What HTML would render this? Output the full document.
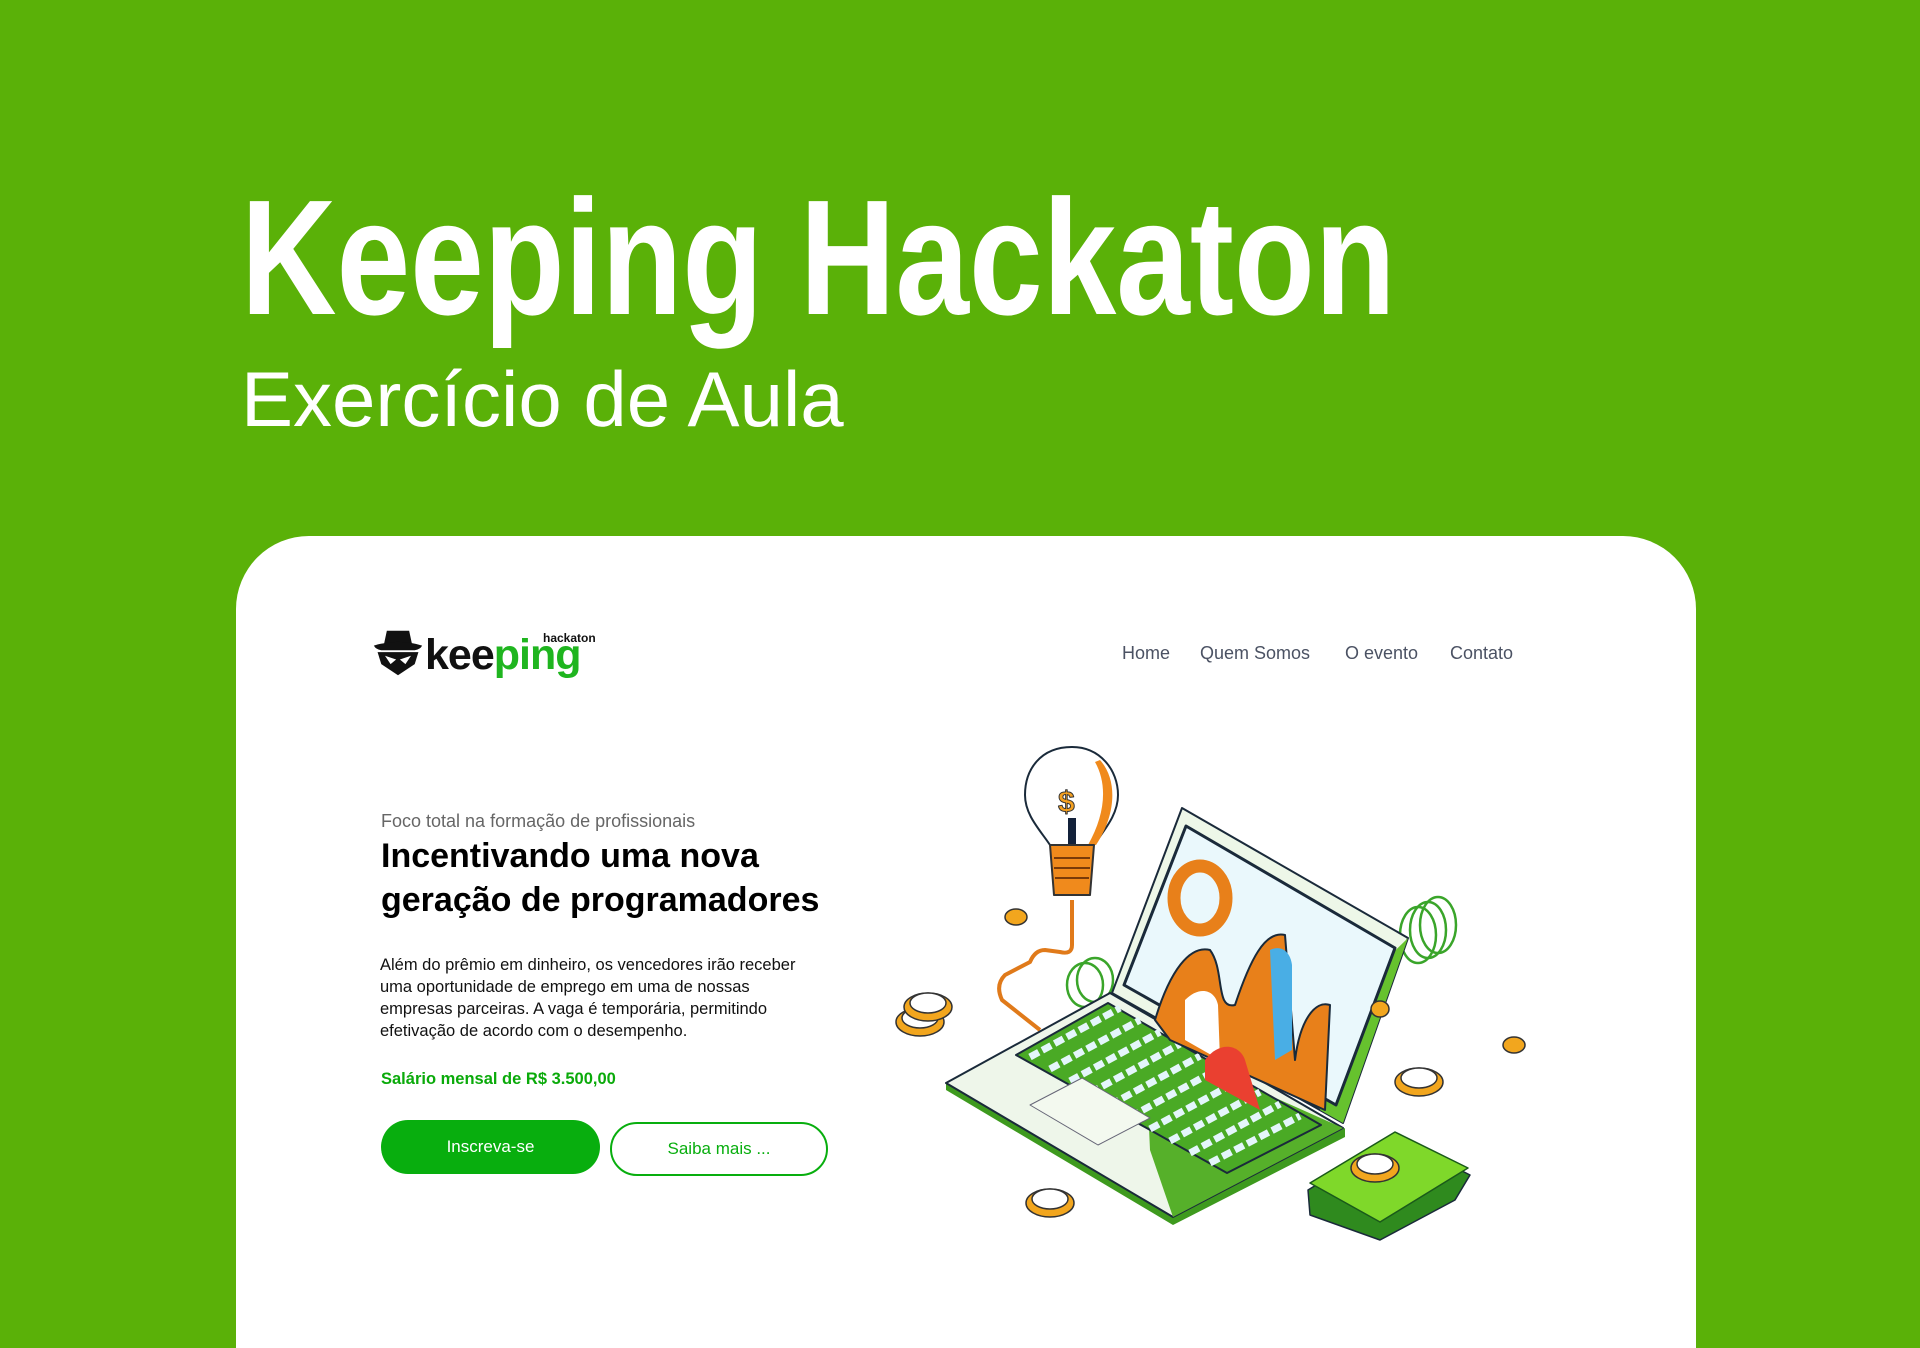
<!DOCTYPE html>
<html><head><meta charset="utf-8"><style>
*{margin:0;padding:0;box-sizing:border-box}
html{width:1920px;height:1348px;overflow:hidden}
body{width:1920px;height:1348px;background:#5ab108;position:relative;overflow:hidden;font-family:"Liberation Sans",sans-serif}
.t1{position:absolute;left:241px;top:176px;font-size:164px;font-weight:700;color:#fff;transform:scaleX(0.807);transform-origin:left top;white-space:nowrap;line-height:1}
.t2{position:absolute;left:241px;top:360px;font-size:78px;color:#fff;line-height:1;white-space:nowrap;font-weight:300}
.card{position:absolute;left:236px;top:536px;width:1460px;height:812px;background:#fff;border-radius:73px 73px 0 0}
.nav{position:absolute;top:643px;font-size:18px;color:#4b5263;white-space:nowrap}
.foco{position:absolute;left:381px;top:811px;font-size:18px;color:#666}
.h{position:absolute;left:381px;top:834px;font-size:34px;font-weight:700;color:#000;line-height:44px;white-space:nowrap}
.p{position:absolute;left:380px;top:954px;font-size:16.5px;color:#111;line-height:22px;white-space:nowrap}
.sal{position:absolute;left:381px;top:1070px;font-size:16.5px;color:#0aaa0a;font-weight:700}
.b1{position:absolute;left:381px;top:1120px;width:219px;height:54px;border-radius:27px;background:#08ae0e;color:#fff;font-size:17px;text-align:center;line-height:54px}
.b2{position:absolute;left:610px;top:1122px;width:218px;height:54px;border-radius:27px;border:2px solid #08ae0e;color:#08ae0e;font-size:17px;text-align:center;line-height:50px}
</style></head><body>
<div class="t1">Keeping Hackaton</div>
<div class="t2">Exercício de Aula</div>
<div class="card"></div>
<svg style="position:absolute;left:372px;top:627px" width="52" height="52" viewBox="0 0 56 56">
<path d="M16 4 L40 4 L43 18 L13 18 Z" fill="#111"/>
<path d="M2 20 Q28 12 54 20 Q52 24 46 25 L10 25 Q4 24 2 20Z" fill="#111"/>
<path d="M6 27 L50 27 L46 40 L28 52 L10 40 Z" fill="#111"/>
<path d="M14 31 L26 35 L20 40 Z M42 31 L30 35 L36 40 Z" fill="#fff"/>
</svg>
<div style="position:absolute;left:425px;top:630px;font-size:43px;font-weight:700;line-height:50px;letter-spacing:-1px;white-space:nowrap"><span style="color:#111">kee</span><span style="color:#1fb51f">ping</span></div>
<div style="position:absolute;left:543px;top:631px;font-size:12px;font-weight:700;color:#111">hackaton</div>
<div class="nav" style="left:1122px">Home</div>
<div class="nav" style="left:1200px">Quem Somos</div>
<div class="nav" style="left:1345px">O evento</div>
<div class="nav" style="left:1450px">Contato</div>
<div class="foco">Foco total na formação de profissionais</div>
<div class="h">Incentivando uma nova<br>geração de programadores</div>
<div class="p">Além do prêmio em dinheiro, os vencedores irão receber<br>uma oportunidade de emprego em uma de nossas<br>empresas parceiras. A vaga é temporária, permitindo<br>efetivação de acordo com o desempenho.</div>
<div class="sal">Salário mensal de R$ 3.500,00</div>
<div class="b1">Inscreva-se</div>
<div class="b2">Saiba mais ...</div>
<svg style="position:absolute;left:0;top:0" width="1920" height="1348" viewBox="0 0 1920 1348" stroke-linejoin="round">
<path d="M1072 900 L1072 945 Q1072 955 1060 952 L1045 950 Q1035 950 1030 962 L1005 975 Q995 985 1002 1000 L1040 1030" fill="none" stroke="#e07a1a" stroke-width="4"/>
<path d="M1072 747 C1040 747 1025 770 1025 795 C1025 815 1040 830 1050 845 L1094 845 C1104 830 1118 815 1118 795 C1118 770 1100 747 1072 747Z" fill="#fff" stroke="#1a2a3a" stroke-width="2"/>
<path d="M1100 760 C1118 780 1116 815 1096 845 L1088 845 C1105 815 1108 785 1095 762Z" fill="#f08a1c"/>
<rect x="1068" y="818" width="8" height="30" fill="#13213a"/>
<text x="1058" y="812" font-size="30" font-weight="700" fill="#f4a020" stroke="#333" stroke-width="1">$</text>
<path d="M1050 845 L1094 845 L1090 895 L1054 895Z" fill="#f08a1c" stroke="#333" stroke-width="2"/>
<path d="M1054 858 L1090 858 M1054 868 L1090 868 M1055 878 L1089 878" stroke="#7a3a08" stroke-width="2"/>
<g fill="none" stroke="#3aa52a" stroke-width="2.5"><ellipse cx="1418" cy="935" rx="18" ry="28"/><ellipse cx="1428" cy="930" rx="18" ry="28"/><ellipse cx="1438" cy="925" rx="18" ry="28"/><ellipse cx="1085" cy="985" rx="18" ry="22"/><ellipse cx="1095" cy="980" rx="18" ry="22"/></g>
<path d="M946 1090 L1173 1225 L1345 1137 L1345 1128 L1173 1215 L946 1083Z" fill="#3e9a1e"/>
<path d="M946 1083 L1110 993 L1343 1128 L1173 1217 Z" fill="#eef6ea" stroke="#1a2a3a" stroke-width="2"/>
<path d="M1145 1040 L1343 1128 L1173 1217 L1150 1150Z" fill="#56b02a"/>
<path d="M1016 1055 L1108 1003 L1321 1125 L1227 1173 Z" fill="#4aaa25" stroke="#1a2a3a" stroke-width="2"/>
<g stroke="#e4f6fb" stroke-width="7" stroke-dasharray="10 4">
<path d="M1030 1057 L1120 1008"/><path d="M1050 1069 L1140 1020"/><path d="M1070 1081 L1160 1032"/><path d="M1090 1093 L1180 1044"/><path d="M1110 1105 L1200 1056"/><path d="M1130 1117 L1220 1068"/><path d="M1150 1129 L1240 1080"/><path d="M1170 1141 L1260 1092"/><path d="M1190 1153 L1280 1104"/><path d="M1210 1163 L1300 1116"/>
</g>
<path d="M1030 1105 L1082 1078 L1150 1118 L1098 1145Z" fill="#f3f9ef" stroke="#667" stroke-width="1"/>
<path d="M1112 993 L1182 808 L1408 938 L1343 1123 Z" fill="#edf7e8" stroke="#1a2a3a" stroke-width="2"/>
<path d="M1360 985 L1408 938 L1343 1123 L1320 1110Z" fill="#66c22e"/>
<path d="M1124 985 L1186 826 L1395 948 L1336 1105 Z" fill="#eaf8fc" stroke="#1a2a3a" stroke-width="3"/>
<ellipse cx="1200" cy="898" rx="26" ry="32" fill="none" stroke="#e8801a" stroke-width="13"/>
<path d="M1155 1020 C1170 970 1190 945 1210 950 C1225 970 1215 1010 1235 1005 C1250 960 1265 930 1285 935 L1295 1060 C1300 1020 1315 1000 1330 1005 L1325 1110 L1170 1040Z" fill="#e8801a" stroke="#1a2a3a" stroke-width="2"/>
<path d="M1185 1000 C1200 985 1215 990 1218 1005 L1220 1060 L1185 1040Z" fill="#fff"/>
<path d="M1205 1060 C1220 1040 1240 1045 1245 1060 L1260 1110 L1205 1080Z" fill="#ea4030"/>
<path d="M1270 950 C1280 945 1290 950 1292 965 L1292 1050 L1275 1060Z" fill="#49aee5"/>
<g stroke="#333" stroke-width="1.5">
<ellipse cx="920" cy="1022" rx="24" ry="14" fill="#f2a61e"/><ellipse cx="920" cy="1018" rx="18" ry="10" fill="#fff"/>
<ellipse cx="928" cy="1007" rx="24" ry="14" fill="#f2a61e"/><ellipse cx="928" cy="1003" rx="18" ry="10" fill="#fff"/>
<ellipse cx="1050" cy="1203" rx="24" ry="14" fill="#f2a61e"/><ellipse cx="1050" cy="1199" rx="18" ry="10" fill="#fff"/>
<ellipse cx="1419" cy="1082" rx="24" ry="14" fill="#f2a61e"/><ellipse cx="1419" cy="1078" rx="18" ry="10" fill="#fff"/>
<ellipse cx="1380" cy="1009" rx="9" ry="8" fill="#f2a61e"/>
<ellipse cx="1514" cy="1045" rx="11" ry="8" fill="#f2a61e"/>
<ellipse cx="1016" cy="917" rx="11" ry="8" fill="#f2a61e"/>
</g>
<path d="M1308 1190 L1395 1137 L1470 1175 L1455 1200 L1380 1240 L1310 1215Z" fill="#2f8a1e" stroke="#1a2a3a" stroke-width="1.5"/>
<path d="M1310 1183 L1395 1132 L1468 1168 L1380 1222 Z" fill="#7fd82a" stroke="#1a5a1a" stroke-width="1.5"/>
<g stroke="#333" stroke-width="1.5"><ellipse cx="1375" cy="1168" rx="24" ry="14" fill="#f2a61e"/><ellipse cx="1375" cy="1164" rx="18" ry="10" fill="#fff"/></g>
</svg>
</body></html>
